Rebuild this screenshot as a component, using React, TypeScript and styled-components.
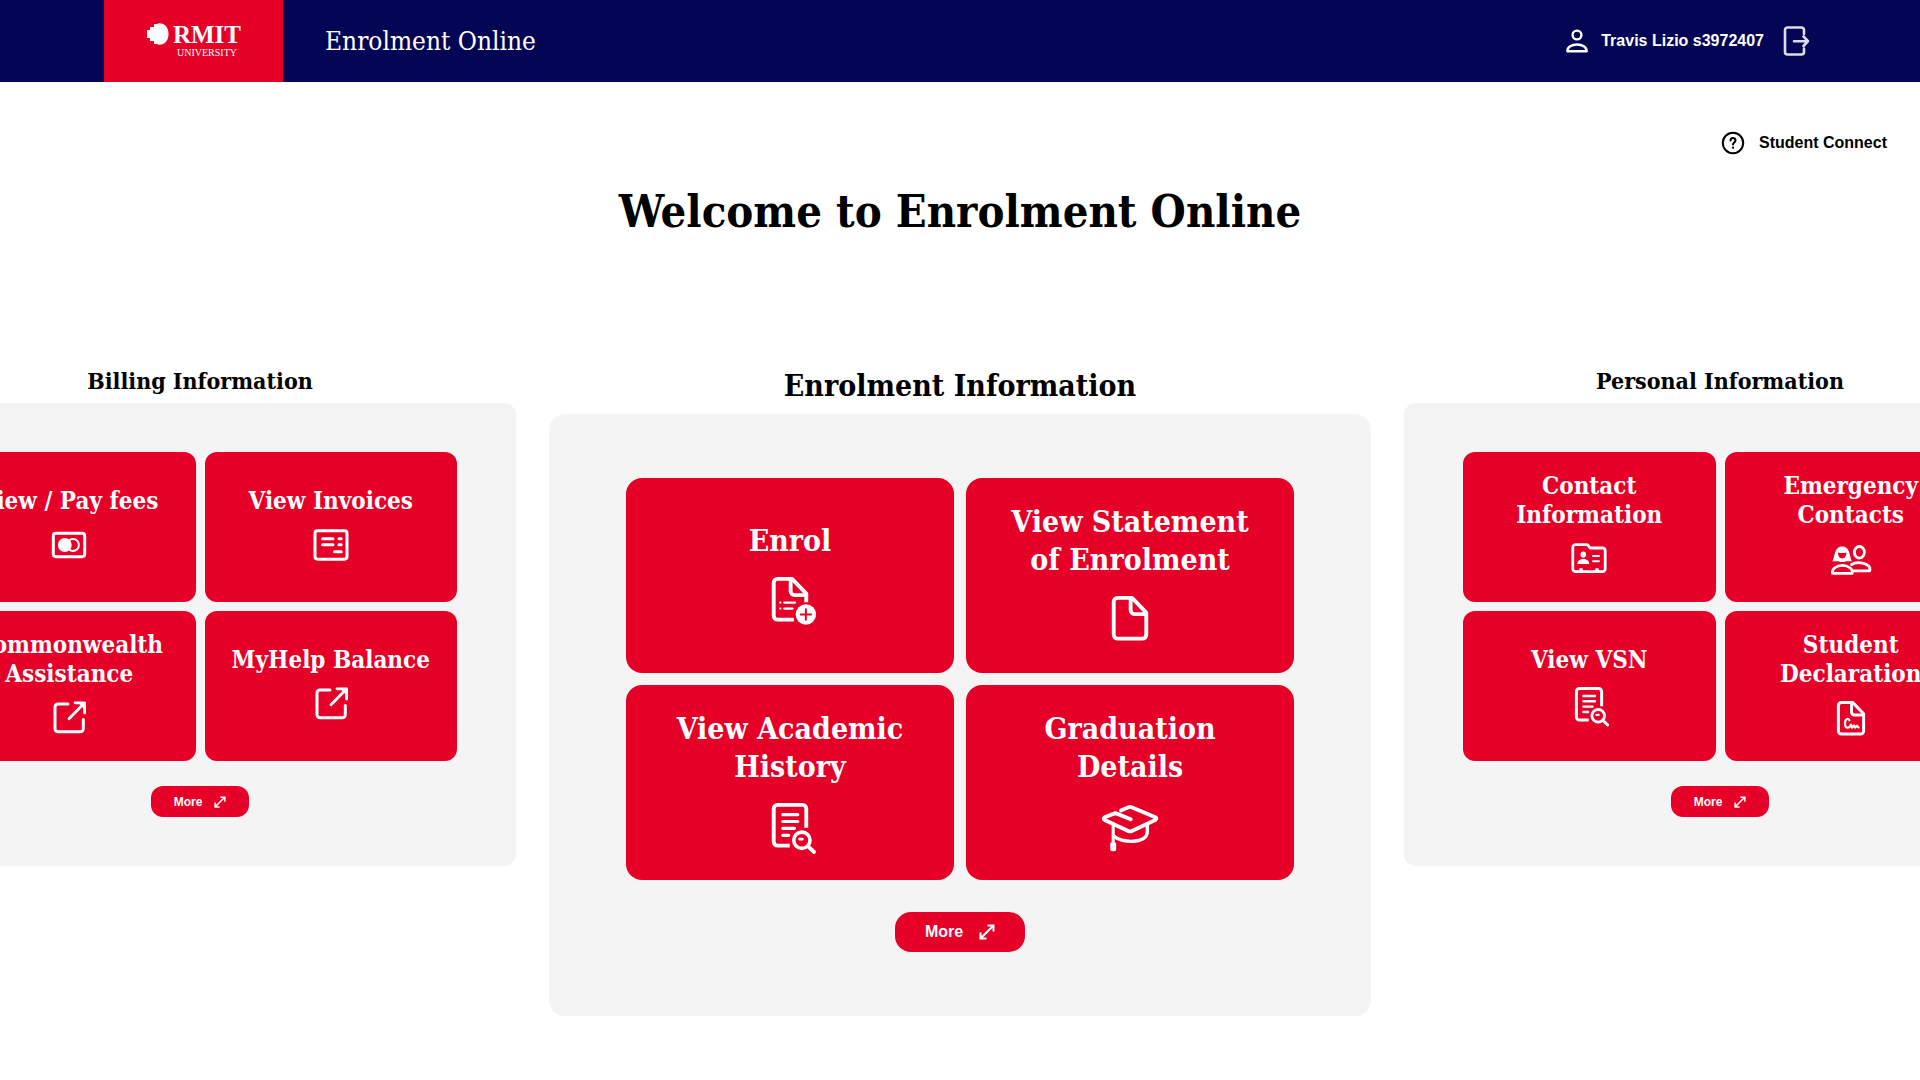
import React from "react";
import styled, { createGlobalStyle } from "styled-components";

const slab = `"DejaVu Serif Condensed", "DejaVu Serif", serif`;
const sans = `"Liberation Sans", Arial, sans-serif`;
const red = "#e60028";
const navy = "#050556";

const GlobalStyle = createGlobalStyle`
  *, *::before, *::after { box-sizing: border-box; }
  body { margin: 0; background: #fff; color: #000; font-family: ${sans}; }
  h1, h2, p { margin: 0; }
  button { border: 0; margin: 0; cursor: pointer; }
  a { color: inherit; text-decoration: none; }
  svg { display: block; flex: none; }
`;

const Page = styled.div`
  min-height: 100vh;
  overflow-x: hidden;
`;

const Header = styled.header`
  display: flex;
  align-items: center;
  height: 82px;
  padding: 0 108px 0 104px;
  background: ${navy};
  color: #fff;
`;

const Brand = styled.a`
  display: flex;
  justify-content: center;
  align-items: flex-start;
  gap: 4px;
  width: 179px;
  height: 82px;
  padding-top: 23px;
  background: ${red};
`;

const BrandText = styled.span`
  display: flex;
  flex-direction: column;
  align-items: center;
  font-family: "Liberation Serif", serif;
`;

const BrandName = styled.span`
  font-size: 25px;
  line-height: 24px;
  font-weight: 700;
`;

const BrandSub = styled.span`
  font-size: 10px;
  line-height: 12px;
`;

const AppName = styled.p`
  margin-left: 42px;
  font-family: ${slab};
  font-size: 26px;
  line-height: 32px;
`;

const Account = styled.div`
  display: flex;
  align-items: center;
  gap: 12px;
  margin-left: auto;
  font-size: 16px;
  font-weight: 700;
`;

const SignOut = styled.button`
  display: flex;
  margin-left: 4px;
  padding: 0;
  background: none;
  color: #dcdcea;
`;

const HelpRow = styled.nav`
  display: flex;
  justify-content: flex-end;
  padding: 48px 33px 0 0;
`;

const HelpLink = styled.a`
  display: flex;
  align-items: center;
  gap: 14px;
  font-size: 16px;
  line-height: 26px;
  font-weight: 700;
`;

const Welcome = styled.h1`
  padding: 24px 16px 118px;
  font-family: ${slab};
  font-size: 45px;
  line-height: 64px;
  font-weight: 700;
  text-align: center;
`;

const Carousel = styled.main`
  display: flex;
  justify-content: center;
  align-items: flex-start;
  gap: 33px;
  overflow: hidden;
  padding-bottom: 40px;
`;

type Sized = { $large?: boolean };

const Slide = styled.section<Sized>`
  flex: none;
  width: ${(p) => (p.$large ? 822 : 632)}px;
`;

const SlideTitle = styled.h2<Sized>`
  margin-bottom: 4px;
  font-family: ${slab};
  font-size: ${(p) => (p.$large ? 30 : 23)}px;
  line-height: ${(p) => (p.$large ? 48 : 37)}px;
  font-weight: 700;
  text-align: center;
`;

const Panel = styled.div<Sized>`
  display: flex;
  flex-direction: column;
  align-items: center;
  gap: ${(p) => (p.$large ? 32 : 25)}px;
  padding: ${(p) => (p.$large ? "64px 77px" : "49px 59px")};
  border-radius: ${(p) => (p.$large ? 16 : 12)}px;
  background: #f4f4f4;
`;

const Tiles = styled.div<Sized>`
  display: grid;
  grid-template-columns: 1fr 1fr;
  grid-auto-rows: ${(p) => (p.$large ? 195 : 150)}px;
  gap: ${(p) => (p.$large ? 12 : 9)}px;
  width: 100%;
`;

const Tile = styled.button<Sized>`
  display: flex;
  flex-direction: column;
  justify-content: center;
  align-items: center;
  gap: ${(p) => (p.$large ? 8 : 6)}px;
  padding: 0 16px;
  border-radius: ${(p) => (p.$large ? 16 : 12)}px;
  background: ${red};
  color: #fff;
  font-family: ${slab};
  font-size: ${(p) => (p.$large ? 30 : 24)}px;
  line-height: ${(p) => (p.$large ? 38 : 29)}px;
  font-weight: 700;
  white-space: pre;
`;

const More = styled.button<Sized>`
  display: flex;
  justify-content: center;
  align-items: center;
  gap: ${(p) => (p.$large ? 16 : 12)}px;
  height: ${(p) => (p.$large ? 40 : 31)}px;
  padding: 0 ${(p) => (p.$large ? 30 : 23)}px;
  border-radius: ${(p) => (p.$large ? 16 : 12)}px;
  background: ${red};
  color: #fff;
  font-family: ${sans};
  font-size: ${(p) => (p.$large ? 16 : 12)}px;
  font-weight: 700;
`;

const docOutline =
  "M14.4 8.4H25.6L36.6 19.8V37a3 3 0 0 1-3 3H14.4a3 3 0 0 1-3-3V11.4a3 3 0 0 1 3-3z";
const docFold = "M24.5 8.4V18a3 3 0 0 0 3 3H36.6";

const icons = {
  docPlus: (
    <>
      <path d="M36.6 26.5V19.8L25.6 8.4H14.4a3 3 0 0 0-3 3V37a3 3 0 0 0 3 3H27" strokeLinecap="butt" />
      <path d={docFold} />
      <path d="M19.5 26.8H28M19.5 31.4H26M16.4 26.8h.2M16.4 31.4h.2" strokeWidth="1.7" />
      <circle cx="36.3" cy="36" r="7.9" fill="currentColor" stroke="none" />
      <path d="M36.3 32v8M32.3 36h8" stroke={red} strokeWidth="1.5" />
    </>
  ),
  doc: (
    <>
      <path d={docOutline} />
      <path d={docFold} />
    </>
  ),
  docSign: (
    <>
      <path d={docOutline} />
      <path d={docFold} />
      <path d="M22.4 26.3c-1-2.6-4.4-1.6-4.4 3.2 0 5.2 4 5.4 6 1.2l1 2.9 2-2.1 1 2.1 2-1.9 1.6 1.7" strokeWidth="2.2" />
    </>
  ),
  docSearch: (
    <>
      <path d="M36.6 26.2V11.4a3 3 0 0 0-3-3H14.4a3 3 0 0 0-3 3V37a3 3 0 0 0 3 3H23.8" strokeLinecap="butt" />
      <path d="M18.4 16H30M18.4 21.3H30M18.4 26.6H27.5M18.4 32H23" strokeWidth="2.4" />
      <circle cx="33.2" cy="35.8" r="6.3" strokeWidth="2.8" />
      <path d="M38 40.5l4.6 4.4" />
      <path d="M31.4 34.9h2.2" strokeWidth="2.2" />
    </>
  ),
  gradCap: (
    <>
      <path d="M17 12.8L22.8 10.2q1.2-.5 2.4 0L43.6 18q1.6 1 0 2.1L25.4 28.6q-1.4.7-2.8 0L4.4 20.1q-1.6-1 0-2.1L12.7 14.8 24.6 19.5" />
      <path d="M37.4 23.5V29.5c0 9-20.4 9-26.2 2.7" strokeWidth="2.6" />
      <path d="M11 23v16" strokeWidth="2.4" />
      <rect x="8.7" y="37.3" width="4.6" height="7" rx="1.4" fill="currentColor" stroke="none" />
    </>
  ),
  pay: (
    <>
      <rect x="8.3" y="12.3" width="31.4" height="23.4" rx="2.6" />
      <circle cx="28" cy="24" r="5.9" strokeWidth="2" />
      <circle cx="19.8" cy="24" r="6.9" fill="currentColor" stroke="none" />
    </>
  ),
  invoice: (
    <>
      <rect x="8" y="9.8" width="32" height="28.4" rx="2.6" />
      <path d="M15.6 17.7H26M32 17.7h2.2M15.6 23.7H26M32 23.7h2.2M27.6 30.7h6.6" />
    </>
  ),
  external: (
    <>
      <path d="M23 10H13a3 3 0 0 0-3 3V34.8a3 3 0 0 0 3 3H35.3a3 3 0 0 0 3-3V25.5" />
      <path d="M24 24.8L38 10.4M30 8.8H39.6V19" strokeWidth="2.8" />
      <path d="M33.5 9H39.6V15.5z" fill="currentColor" stroke="none" />
    </>
  ),
  contact: (
    <>
      <path d="M10.6 9.7H21.4a2.4 2.4 0 0 1 1.9.9l1.8 2.4H37.4a2.8 2.8 0 0 1 2.8 2.8V33.9a2.8 2.8 0 0 1-2.8 2.8H10.6a2.8 2.8 0 0 1-2.8-2.8V12.5a2.8 2.8 0 0 1 2.8-2.8z" strokeWidth="2.8" />
      <ellipse cx="18.3" cy="19.6" rx="2.8" ry="3.1" fill="currentColor" stroke="none" />
      <path d="M12.4 29c0-3.6 2.8-5 5.9-5s5.9 1.4 5.9 5z" fill="currentColor" stroke="none" />
      <path d="M28 21h6M28 26.2h6" strokeWidth="2" />
      <circle cx="16" cy="35" r="2" fill="currentColor" stroke="none" />
      <circle cx="32" cy="35" r="2" fill="currentColor" stroke="none" />
    </>
  ),
  people: (
    <>
      <path
        d="M5.4 26.2C8 22 7 11.4 15.2 11.4S22.4 22 25 26.2H19c-2.4 1.2-5.2 1.2-7.6 0zM11 17.6c0 3 1.4 6 4.2 6s4.2-3 4.2-6q-4.2 1-8.4 0z"
        fill="currentColor"
        fillRule="evenodd"
        stroke="none"
      />
      <path d="M5.6 38.4c-1.200-4.400 4-8 9.800-8s11 3.600 9.800 8z" strokeWidth="2.800" />
      <ellipse cx="32.4" cy="17.3" rx="5" ry="5.800" strokeWidth="2.800" />
      <path d="M24.5 29.5c5.500-3.600 20.500-1.400 18.200 6.300H27" strokeWidth="2.800" />
    </>
  ),
};

type IconName = keyof typeof icons;

function TileIcon({ name, size }: { name: IconName; size: number }) {
  return (
    <svg
      width={size}
      height={size}
      viewBox="0 0 48 48"
      fill="none"
      stroke="currentColor"
      strokeWidth="3"
      strokeLinecap="round"
      strokeLinejoin="round"
      overflow="visible"
      aria-hidden="true"
    >
      {icons[name]}
    </svg>
  );
}

function ExpandIcon({ size }: { size: number }) {
  return (
    <svg width={size} height={size} viewBox="0 0 16 16" fill="none" stroke="currentColor" strokeWidth="2" aria-hidden="true">
      <path d="M2 14L14 2M8.5 1.500H14.500V7.500M7.500 14.500H1.500V8.500" />
    </svg>
  );
}

function PixelMark() {
  return (
    <svg width="23" height="22" viewBox="0 0 23 22" fill="#fff" aria-hidden="true">
      <path d="M8 1H11Q12 0 15 .5C19.500 1 22.500 5 22.500 11S19.500 21 15 21.500Q12 22 11 21H8V18H4V15H1V7H4V4H8z" />
    </svg>
  );
}

type Item = { label: string; icon: IconName };
type Group = { title: string; large?: boolean; items: Item[] };

const groups: Group[] = [
  {
    title: "Billing Information",
    items: [
      { label: "View / Pay fees", icon: "pay" },
      { label: "View Invoices", icon: "invoice" },
      { label: "Commonwealth\nAssistance", icon: "external" },
      { label: "MyHelp Balance", icon: "external" },
    ],
  },
  {
    title: "Enrolment Information",
    large: true,
    items: [
      { label: "Enrol", icon: "docPlus" },
      { label: "View Statement\nof Enrolment", icon: "doc" },
      { label: "View Academic\nHistory", icon: "docSearch" },
      { label: "Graduation\nDetails", icon: "gradCap" },
    ],
  },
  {
    title: "Personal Information",
    items: [
      { label: "Contact\nInformation", icon: "contact" },
      { label: "Emergency\nContacts", icon: "people" },
      { label: "View VSN", icon: "docSearch" },
      { label: "Student\nDeclaration", icon: "docSign" },
    ],
  },
];

export default function App() {
  return (
    <Page>
      <GlobalStyle />
      <Header>
        <Brand href="#home">
          <PixelMark />
          <BrandText>
            <BrandName>RMIT</BrandName>
            <BrandSub>UNIVERSITY</BrandSub>
          </BrandText>
        </Brand>
        <AppName>Enrolment Online</AppName>
        <Account>
          <svg width="24" height="26" viewBox="0 0 24 26" fill="none" stroke="#fff" strokeWidth="2.400" strokeLinejoin="round" aria-hidden="true">
            <circle cx="12" cy="7" r="4.400" />
            <path d="M2.400 23.200c0-4 4-6.700 9.600-6.700s9.600 2.700 9.600 6.700z" />
          </svg>
          <span>Travis Lizio s3972407</span>
          <SignOut aria-label="Sign out">
            <svg width="32" height="32" viewBox="0 0 32 32" fill="none" stroke="currentColor" strokeWidth="2.600" strokeLinecap="round" strokeLinejoin="round">
              <path d="M24 9V5a2.500 2.500 0 0 0-2.500-2.500H7.500A2.500 2.500 0 0 0 5 5V27a2.500 2.500 0 0 0 2.500 2.500H21.500A2.500 2.500 0 0 0 24 27V23.500" />
              <path d="M14 16.200H27.500M23.500 11.500L28 16.200 23.500 21" />
            </svg>
          </SignOut>
        </Account>
      </Header>
      <HelpRow>
        <HelpLink href="#student-connect">
          <svg width="24" height="24" viewBox="0 0 24 24" fill="none" stroke="#000" strokeWidth="2" strokeLinecap="round" aria-hidden="true">
            <circle cx="12" cy="12" r="10.200" />
            <path d="M9.500 9.500c0-3.300 5-3.200 5-.2 0 2-2.500 2.200-2.500 4.200" />
            <path d="M12 16.700v.1" strokeWidth="2.200" />
          </svg>
          Student Connect
        </HelpLink>
      </HelpRow>
      <Welcome>Welcome to Enrolment Online</Welcome>
      <Carousel>
        {groups.map(({ title, large, items }) => (
          <Slide key={title} $large={large} aria-label={title}>
            <SlideTitle $large={large}>{title}</SlideTitle>
            <Panel $large={large}>
              <Tiles $large={large}>
                {items.map((item) => (
                  <Tile key={item.label} $large={large}>
                    <span>{item.label}</span>
                    <TileIcon name={item.icon} size={large ? 62 : 48} />
                  </Tile>
                ))}
              </Tiles>
              <More $large={large}>
                More
                <ExpandIcon size={large ? 16 : 12} />
              </More>
            </Panel>
          </Slide>
        ))}
      </Carousel>
    </Page>
  );
}
